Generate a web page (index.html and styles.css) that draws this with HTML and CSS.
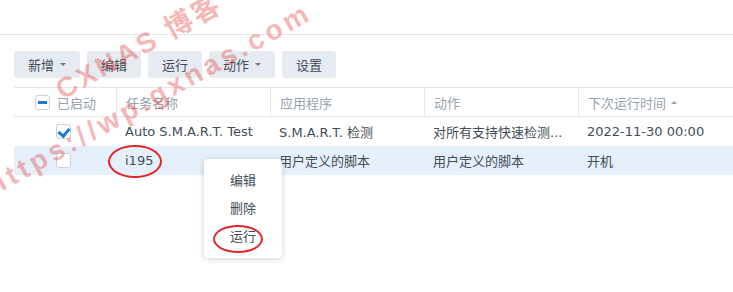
FILE: index.html
```html
<!DOCTYPE html>
<html lang="zh-CN">
<head>
    <meta charset="UTF-8">
    <title>任务计划</title>
    <link rel="stylesheet" href="styles.css">
</head>
<body>
    <div class="topbar"></div>

    <div class="toolbar">
        <button class="btn">新增 <span class="caret"></span></button>
        <button class="btn">编辑</button>
        <button class="btn">运行</button>
        <button class="btn">动作 <span class="caret"></span></button>
        <button class="btn">设置</button>
    </div>

    <div class="grid">
        <div class="row head">
            <div class="cell col-enable">
                <span class="check partial"></span>
                <span>已启动</span>
            </div>
            <div class="cell col-name">任务名称</div>
            <div class="cell col-app">应用程序</div>
            <div class="cell col-action">动作</div>
            <div class="cell col-next">下次运行时间 <span class="sort"></span></div>
        </div>
        <div class="row">
            <div class="cell col-enable"><span class="check on"></span></div>
            <div class="cell col-name">Auto S.M.A.R.T. Test</div>
            <div class="cell col-app">S.M.A.R.T. 检测</div>
            <div class="cell col-action">对所有支持快速检测...</div>
            <div class="cell col-next">2022-11-30 00:00</div>
        </div>
        <div class="row selected">
            <div class="cell col-enable"><span class="check"></span></div>
            <div class="cell col-name">i195</div>
            <div class="cell col-app">用户定义的脚本</div>
            <div class="cell col-action">用户定义的脚本</div>
            <div class="cell col-next">开机</div>
        </div>
    </div>

    <!-- context menu opened on the i195 row -->
    <div class="menu">
        <div class="menu-item">编辑</div>
        <div class="menu-item">删除</div>
        <div class="menu-item">运行</div>
    </div>

    <!-- red circles drawn on the screenshot -->
    <div class="mark mark-name"></div>
    <div class="mark mark-run"></div>

    <div class="watermark wm-1">CXNAS 博客</div>
    <div class="watermark wm-2">https://wp.gxnas.com</div>
</body>
</html>
```

FILE: styles.css
```css
body {
    margin: 0;
    font-family: 'DejaVu Sans', 'Noto Sans CJK SC', sans-serif;
    font-size: 13px;
    color: #434d58;
    background-color: #ffffff;
    position: relative;
    height: 292px;
    overflow: hidden;
}
.topbar {
    height: 34px;
    border-bottom: 1px solid #e3e7eb;
}
.toolbar {
    display: flex;
    gap: 7px;
    padding: 16px 14px 0;
}
.btn {
    height: 27px;
    padding: 0 14px;
    border: none;
    border-radius: 3px;
    background-color: #e6ebf1;
    color: #434d58;
    font-family: inherit;
    font-size: 13px;
    display: flex;
    align-items: center;
    gap: 4px;
}
.caret {
    width: 0;
    height: 0;
    border-left: 3px solid transparent;
    border-right: 3px solid transparent;
    border-top: 3px solid #6b7682;
    margin-left: 2px;
}
.grid {
    margin: 9px 0 0 14px;
}
.row {
    display: flex;
    height: 29px;
    align-items: center;
    box-sizing: border-box;
}
.row.head {
    border-top: 1px solid #e3e7eb;
    border-bottom: 1px solid #e3e7eb;
    color: #97a2ad;
    height: 30px;
}
.row.selected {
    background-color: #e5f0fb;
}
.cell {
    height: 100%;
    display: flex;
    align-items: center;
    padding-left: 9px;
    box-sizing: border-box;
    white-space: nowrap;
}
.head .cell + .cell {
    border-left: 1px solid #e6e9ed;
}
.col-enable {
    width: 102px;
    padding-left: 42px;
}
.head .col-enable {
    padding-left: 21px;
    gap: 7px;
}
.col-name,
.col-app,
.col-action {
    width: 154px;
}
.col-next {
    flex: 1;
    gap: 5px;
}
.check {
    width: 15px;
    height: 15px;
    box-sizing: border-box;
    border: 1px solid #c8d1da;
    border-radius: 3px;
    background-color: #ffffff;
    position: relative;
}
.check.partial::after {
    content: "";
    position: absolute;
    left: 2px;
    right: 2px;
    top: 5px;
    height: 3px;
    background-color: #1a78d6;
}
.check.on::after {
    content: "";
    position: absolute;
    left: 3px;
    top: 1px;
    width: 5px;
    height: 8px;
    border-right: 3px solid #1a78d6;
    border-bottom: 3px solid #1a78d6;
    transform: rotate(40deg);
}
.sort {
    width: 0;
    height: 0;
    border-left: 3px solid transparent;
    border-right: 3px solid transparent;
    border-bottom: 3px solid #97a2ad;
}
.menu {
    position: absolute;
    left: 204px;
    top: 159px;
    width: 78px;
    padding: 8px 0 7px;
    background-color: #ffffff;
    border-radius: 4px;
    box-shadow: 0 1px 6px rgba(0, 0, 0, 0.18);
}
.menu-item {
    height: 28px;
    line-height: 28px;
    text-align: center;
    color: #434d58;
}
.mark {
    position: absolute;
    border: 2px solid #e02828;
    border-radius: 50%;
    box-sizing: border-box;
}
.mark-name {
    left: 108px;
    top: 145px;
    width: 54px;
    height: 33px;
}
.mark-run {
    left: 213px;
    top: 225px;
    width: 50px;
    height: 28px;
}
.watermark {
    position: absolute;
    font-family: 'Liberation Sans', 'Noto Sans CJK SC', sans-serif;
    font-weight: 700;
    font-size: 28px;
    line-height: 32px;
    letter-spacing: 3px;
    color: rgba(232, 45, 45, 0.34);
    white-space: nowrap;
    transform-origin: left bottom;
    transform: rotate(-29deg);
    pointer-events: none;
}
.wm-1 {
    left: 66px;
    top: 74px;
}
.wm-2 {
    left: -3px;
    top: 170px;
    letter-spacing: 4px;
}
```
